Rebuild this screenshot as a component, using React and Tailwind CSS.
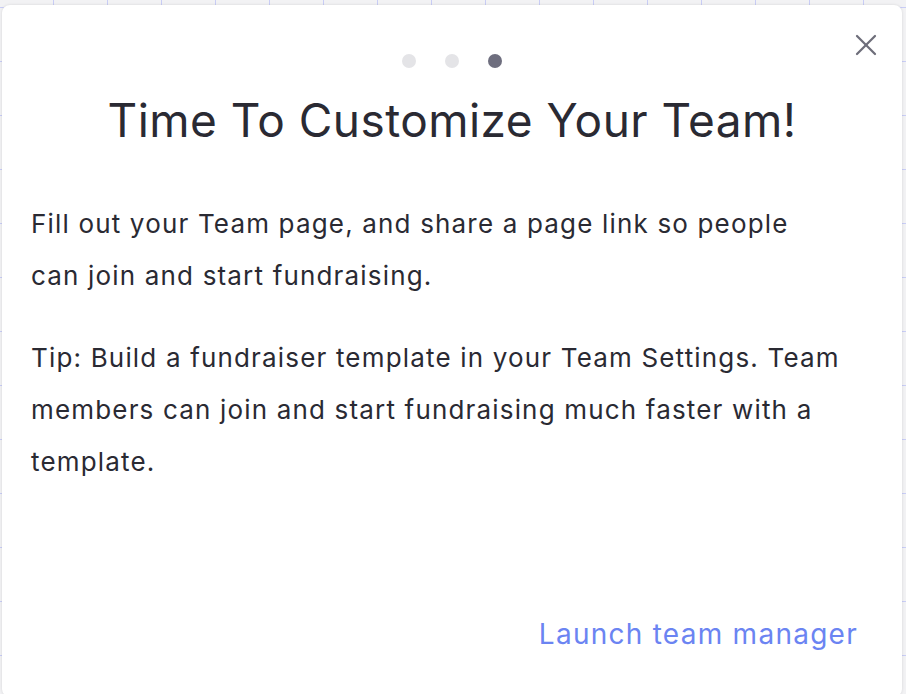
import React from 'react';
import { X } from 'lucide-react';

const App = () => {
    const step = 2;

    return (
        <div className="min-h-[694px] w-[906px] overflow-hidden bg-[#f2f2f4] bg-[linear-gradient(to_right,#c9cdf6_1px,transparent_1px),linear-gradient(to_bottom,#c9cdf6_1px,transparent_1px)] bg-[size:54px_54px] bg-[position:53px_7px] pt-[5px] pl-[2px] font-['Inter',sans-serif]">
            {/* Modal */}
            <div className="relative w-[900px] h-[692px] bg-white rounded-lg shadow-[0_0_3px_rgba(0,0,0,0.12)] flex flex-col px-[29px]">
                <button className="absolute top-[22px] right-[18px] text-[#6e6e7a]">
                    <X size={36} strokeWidth={1.5} />
                </button>

                {/* Step dots */}
                <div className="flex justify-center gap-[29px] pt-[49px]">
                    {[0, 1, 2].map(i => (
                        <span
                            key={i}
                            className={i === step ? 'w-[14px] h-[14px] rounded-full bg-[#6e6e7e]' : 'w-[14px] h-[14px] rounded-full bg-[#e4e4e7]'}
                        ></span>
                    ))}
                </div>

                <h2 className="mt-[22px] text-center text-[46px] leading-[60px] tracking-[0.01em] text-[#2a2a33] font-normal">
                    Time To Customize Your Team!
                </h2>

                <div className="mt-[48px] max-w-[810px] text-[26px] leading-[52px] tracking-[0.045em] text-[#2a2a33] space-y-[30px]">
                    <p>Fill out your Team page, and share a page link so people can join and start fundraising.</p>
                    <p>Tip: Build a fundraiser template in your Team Settings. Team members can join and start fundraising much faster with a template.</p>
                </div>

                <div className="mt-auto flex justify-end pb-[43px] pr-[15px]">
                    <a href="#" className="text-[28px] leading-[40px] tracking-[0.045em] text-[#6b84f2]">Launch team manager</a>
                </div>
            </div>
        </div>
    );
};

export default App;
